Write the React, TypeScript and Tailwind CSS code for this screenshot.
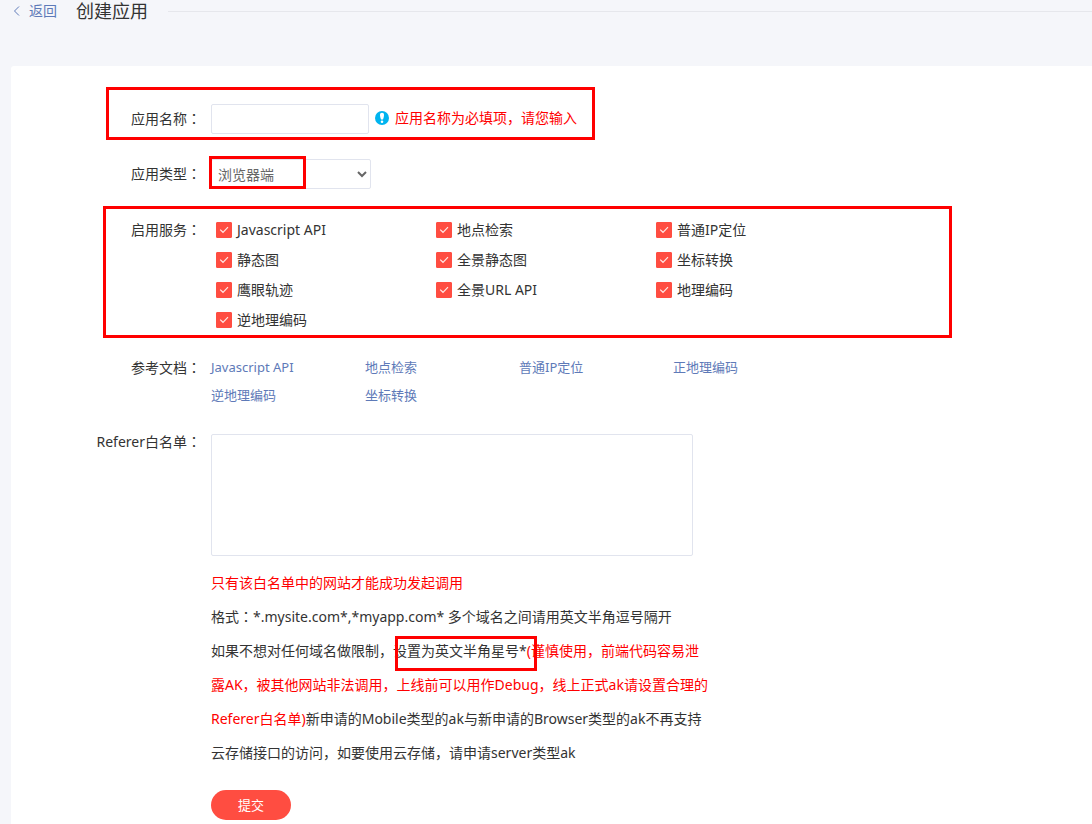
import { useState } from "react";
import type { ReactNode } from "react";

const services = [
  "Javascript API",
  "地点检索",
  "普通IP定位",
  "静态图",
  "全景静态图",
  "坐标转换",
  "鹰眼轨迹",
  "全景URL API",
  "地理编码",
  "逆地理编码",
];

const docs = ["Javascript API", "地点检索", "普通IP定位", "正地理编码", "逆地理编码", "坐标转换"];

// Red frame that points out the fields to fill in
function Highlight({ className }: { className: string }) {
  return <span aria-hidden="true" className={`pointer-events-none absolute border-3 border-[#ff0000] ${className}`} />;
}

// The Japanese face centres the full-width colon in its cell
function Colon() {
  return <span className="font-['Noto_Sans_CJK_JP',sans-serif] leading-none">：</span>;
}

function LabelText({ children }: { children: ReactNode }) {
  return (
    <>
      {children}
      <Colon />
    </>
  );
}

const labelClass = "h-[30px] w-[190px] shrink-0 text-right leading-[29px]";

interface ServiceProps {
  name: string;
  checked: boolean;
  onToggle: () => void;
}

function Service({ name, checked, onToggle }: ServiceProps) {
  return (
    <label className="flex h-[30px] items-center gap-[5px]">
      <span className="grid h-4 w-4">
        <input
          type="checkbox"
          checked={checked}
          onChange={onToggle}
          className="col-start-1 row-start-1 h-4 w-4 appearance-none rounded-[1px] border border-[#dfe3ec] checked:border-[#ff4d41] checked:bg-[#ff4d41]"
        />
        {checked && (
          <svg className="pointer-events-none col-start-1 row-start-1 h-4 w-4" viewBox="0 0 16 16" fill="none" stroke="#ffe9e7" strokeWidth="1.2">
            <path d="M4.2 7.6 L7 10.3 L12 5.2" />
          </svg>
        )}
      </span>
      <span>{name}</span>
    </label>
  );
}

export default function App() {
  const [name, setName] = useState("");
  const [type, setType] = useState("browser");
  const [referer, setReferer] = useState("");
  const [enabled, setEnabled] = useState<string[]>(services);

  const toggle = (service: string) => {
    setEnabled(enabled.includes(service) ? enabled.filter((s) => s !== service) : [...enabled, service]);
  };

  return (
    <div className="min-h-screen bg-[#f5f6fa] font-['Noto_Sans','Noto_Sans_CJK_SC',sans-serif] text-sm text-[#333]">
      <header className="flex h-[22px] items-center pl-3">
        <a href="#" className="flex items-center gap-2 text-[#5e7ab8]">
          <svg className="h-[10px] w-[9px]" viewBox="0 0 9 10" fill="none" stroke="currentColor">
            <path d="M7 0.5 L2.5 5 L7 9.5" />
          </svg>
          返回
        </a>
        <h1 className="ml-[19px] text-lg leading-[22px] font-normal">创建应用</h1>
        <div className="ml-5 h-px grow bg-[#e6e7ec]" />
      </header>

      <main className="mt-11 ml-[11px] rounded-tl-[3px] bg-white pt-[38px] pb-1">
        <form onSubmit={(e) => e.preventDefault()}>
          <div className="relative flex gap-[10px]">
            <label htmlFor="name" className={labelClass}>
              <LabelText>应用名称</LabelText>
            </label>
            <input
              id="name"
              type="text"
              value={name}
              onChange={(e) => setName(e.target.value)}
              className="h-[30px] w-[158px] rounded-[2px] border border-[#e1e4ee] px-2 outline-none"
            />
            <p className="-ml-1 flex h-7 items-center gap-[6px] text-[#ff0000]">
              <svg className="h-[14px] w-[14px]" viewBox="0 0 14 14">
                <circle cx="7" cy="7" r="7" fill="#00b4ef" />
                <path d="M7 1.8 C8.3 1.8 9 2.7 9 4 C9 5.5 8.4 7.4 8 8.6 H6 C5.6 7.4 5 5.5 5 4 C5 2.7 5.7 1.8 7 1.8 Z" fill="#fff" />
                <circle cx="7" cy="10.8" r="1.3" fill="#fff" />
              </svg>
              应用名称为必填项，请您输入
            </p>
            <Highlight className="-top-[17px] left-[95px] h-[53px] w-[489px]" />
          </div>

          <div className="relative mt-[25px] flex gap-[10px]">
            <label htmlFor="type" className={labelClass}>
              <LabelText>应用类型</LabelText>
            </label>
            <select
              id="type"
              value={type}
              onChange={(e) => setType(e.target.value)}
              className="h-[30px] w-40 rounded-[2px] border border-[#e1e4ee] bg-white px-[2px] text-[#666] outline-none"
            >
              <option value="browser">浏览器端</option>
            </select>
            <Highlight className="-top-[3px] left-[198px] h-[33px] w-[97px]" />
          </div>

          <fieldset className="relative mt-[26px] flex gap-[15px]">
            <div className={labelClass}>
              <LabelText>启用服务</LabelText>
            </div>
            <div className="grid grid-cols-[repeat(3,220px)]">
              {services.map((service) => (
                <Service key={service} name={service} checked={enabled.includes(service)} onToggle={() => toggle(service)} />
              ))}
            </div>
            <Highlight className="-top-[9px] left-[92px] h-[132px] w-[849px]" />
          </fieldset>

          <div className="mt-[18px] flex gap-[10px]">
            <div className={labelClass}>
              <LabelText>参考文档</LabelText>
            </div>
            <div className="grid grid-cols-[repeat(4,154px)] text-[13px] leading-7 text-[#5e7ab8]">
              {docs.map((doc) => (
                <a key={doc} href="#">
                  {doc}
                </a>
              ))}
            </div>
          </div>

          <div className="mt-[18px] flex gap-[10px]">
            <label htmlFor="referer" className={labelClass}>
              <LabelText>Referer白名单</LabelText>
            </label>
            <div className="pt-[7px]">
              <textarea
                id="referer"
                value={referer}
                onChange={(e) => setReferer(e.target.value)}
                className="block h-[122px] w-[482px] resize-none rounded-[2px] border border-[#e1e4ee] p-2 outline-none"
              />
              <div className="mt-[10px] w-[500px] leading-[34px]">
                <p className="text-[#ff0000]">只有该白名单中的网站才能成功发起调用</p>
                <p>
                  格式
                  <Colon />
                  *.mysite.com*,*myapp.com* 多个域名之间请用英文半角逗号隔开
                </p>
                <p>
                  如果不想对任何域名做限制，
                  <span className="relative">
                    设置为英文半角星号*
                    <Highlight className="-top-[5px] left-[2px] h-[35px] w-[142px]" />
                  </span>
                  <span className="text-[#ff0000]">
                    (谨慎使用，前端代码容易泄露AK，被其他网站非法调用，上线前可以用作Debug，线上正式ak请设置合理的Referer白名单)
                  </span>
                  新申请的Mobile类型的ak与新申请的Browser类型的ak不再支持云存储接口的访问，如要使用云存储，请申请server类型ak
                </p>
              </div>
              <button type="submit" className="mt-5 block h-[30px] w-20 rounded-full bg-[#ff4d41] text-[13px] text-white">
                提交
              </button>
            </div>
          </div>
        </form>
      </main>
    </div>
  );
}
